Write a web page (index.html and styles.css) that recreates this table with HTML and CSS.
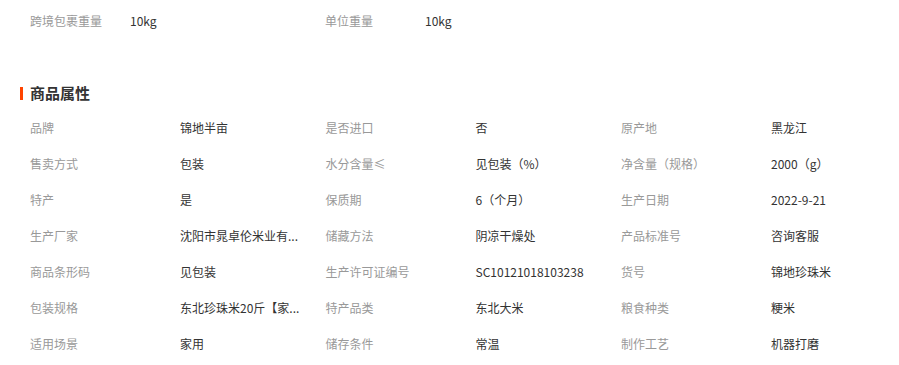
FILE: index.html
```html
<!DOCTYPE html>
<html lang="zh-CN">
<head>
<meta charset="utf-8">
<title>商品属性</title>
<link rel="stylesheet" href="styles.css">
</head>
<body>
<div class="page">
  <div class="pkg-row">
    <div class="pkg-item"><span class="pkg-label">跨境包裹重量</span><span class="pkg-value">10kg</span></div>
    <div class="pkg-item"><span class="pkg-label">单位重量</span><span class="pkg-value">10kg</span></div>
  </div>
  <h2 class="section-title">商品属性</h2>
  <div class="attr-grid">
    <div class="attr"><span class="label">品牌</span><span class="value">锦地半亩</span></div>
    <div class="attr"><span class="label">是否进口</span><span class="value">否</span></div>
    <div class="attr"><span class="label">原产地</span><span class="value">黑龙江</span></div>
    <div class="attr"><span class="label">售卖方式</span><span class="value">包装</span></div>
    <div class="attr"><span class="label">水分含量≤</span><span class="value">见包装（%）</span></div>
    <div class="attr"><span class="label">净含量（规格）</span><span class="value">2000（g）</span></div>
    <div class="attr"><span class="label">特产</span><span class="value">是</span></div>
    <div class="attr"><span class="label">保质期</span><span class="value">6（个月）</span></div>
    <div class="attr"><span class="label">生产日期</span><span class="value">2022-9-21</span></div>
    <div class="attr"><span class="label">生产厂家</span><span class="value">沈阳市晁卓伦米业有...</span></div>
    <div class="attr"><span class="label">储藏方法</span><span class="value">阴凉干燥处</span></div>
    <div class="attr"><span class="label">产品标准号</span><span class="value">咨询客服</span></div>
    <div class="attr"><span class="label">商品条形码</span><span class="value">见包装</span></div>
    <div class="attr"><span class="label">生产许可证编号</span><span class="value">SC10121018103238</span></div>
    <div class="attr"><span class="label">货号</span><span class="value">锦地珍珠米</span></div>
    <div class="attr"><span class="label">包装规格</span><span class="value">东北珍珠米20斤【家...</span></div>
    <div class="attr"><span class="label">特产品类</span><span class="value">东北大米</span></div>
    <div class="attr"><span class="label">粮食种类</span><span class="value">粳米</span></div>
    <div class="attr"><span class="label">适用场景</span><span class="value">家用</span></div>
    <div class="attr"><span class="label">储存条件</span><span class="value">常温</span></div>
    <div class="attr"><span class="label">制作工艺</span><span class="value">机器打磨</span></div>
  </div>
</div>
</body>
</html>
```
FILE: styles.css
```css
* { box-sizing: border-box; }
html, body { margin: 0; padding: 0; background: #fff; }
body {
  font-family: "Microsoft YaHei", "Noto Sans CJK SC", "DejaVu Sans", sans-serif;
  font-size: 12px;
  color: #333;
  width: 899px;
  height: 365px;
  overflow: hidden;
}
.page { padding: 0 0 0 20px; }
.pkg-row {
  display: grid;
  grid-template-columns: 295px 295px;
  padding: 12px 0 0 10px;
  height: 30px;
}
.pkg-item { display: flex; line-height: 18px; }
.pkg-label { width: 100px; color: #999; flex: none; }
.pkg-value { color: #333; }
.section-title {
  margin: 54px 0 0 0;
  height: 18px;
  line-height: 18px;
  font-size: 15px;
  font-weight: bold;
  color: #333;
  display: flex;
  align-items: center;
  gap: 7px;
}
.section-title::before {
  content: "";
  width: 3px;
  height: 13px;
  background: #ff4400;
}
.attr-grid {
  display: grid;
  grid-template-columns: 295.5px 295.5px 295.5px;
  grid-auto-rows: 36px;
  padding: 7px 0 0 10px;
}
.attr { display: flex; align-items: center; }
.label { width: 150px; flex: none; color: #999; }
.value {
  white-space: nowrap;
  color: #333;
}
```
